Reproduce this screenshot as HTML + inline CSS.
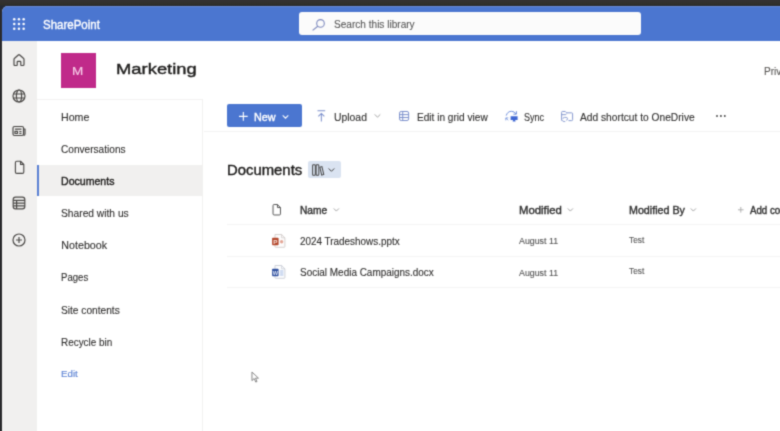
<!DOCTYPE html>
<html><head><meta charset="utf-8">
<style>
html,body{margin:0;padding:0;}
body{width:780px;height:431px;overflow:hidden;background:#2a2a2d;position:relative;font-family:"Liberation Sans",sans-serif;}
#root{position:absolute;left:0;top:0;width:780px;height:431px;background:#2a2a2d;filter:url(#bl);overflow:hidden;}
#win{position:absolute;left:2px;top:6px;width:778px;height:425px;background:#fff;border-top-left-radius:6px;overflow:hidden;}
#c{position:absolute;left:-2px;top:-6px;width:780px;height:431px;}
.t{position:absolute;white-space:nowrap;line-height:1;transform-origin:0 50%;}
.b{position:absolute;}
svg{position:absolute;overflow:visible;}
.hl{position:absolute;left:227px;width:553px;height:1px;background:#f4f4f4;}
</style></head><body>
<svg width="0" height="0" style="position:absolute"><filter id="bl" x="0" y="0" width="100%" height="100%" color-interpolation-filters="sRGB"><feConvolveMatrix order="3" kernelMatrix="1 4 1 4 16 4 1 4 1" divisor="36" edgeMode="duplicate" preserveAlpha="true"/></filter></svg>
<div id="root">
<div style="position:absolute;left:0;top:0;width:780px;height:8px;background:linear-gradient(#343133 0,#302f2a 55%,#232836 85%);"></div>
<div id="win"><div id="c">
 <div class="b" style="left:0;top:6px;width:780px;height:34.5px;background:#4b76d0;box-shadow:inset 0 1px 0 #6888d6;"></div>
 <!-- waffle -->
 <svg style="left:13.2px;top:17.6px" width="11.9" height="11.9" viewBox="0 0 11.9 11.9" fill="#fff"><circle cx="1.25" cy="1.25" r="1.25"/><circle cx="5.95" cy="1.25" r="1.25"/><circle cx="10.65" cy="1.25" r="1.25"/><circle cx="1.25" cy="5.95" r="1.25"/><circle cx="5.95" cy="5.95" r="1.25"/><circle cx="10.65" cy="5.95" r="1.25"/><circle cx="1.25" cy="10.65" r="1.25"/><circle cx="5.95" cy="10.65" r="1.25"/><circle cx="10.65" cy="10.65" r="1.25"/></svg>
 <!-- search -->
 <div class="b" style="left:299px;top:12.3px;width:342px;height:23px;background:#fbfbfb;border-radius:3px;"></div>
 <svg style="left:312px;top:19px" width="13" height="12" viewBox="0 0 13 12" fill="none" stroke="#7d89be" stroke-width="1.1"><circle cx="8.5" cy="4.4" r="3.8"/><path d="M5.8 7.2 L0.6 11.4"/></svg>

 <div class="b" style="left:2px;top:40.5px;width:35px;height:391px;background:#f1f0ef;"></div>
 <!-- rail icons -->
 <svg style="left:12px;top:53px" width="14" height="14" viewBox="0 0 14 14" fill="none" stroke="#4a4846" stroke-width="1.2" stroke-linejoin="round"><path d="M2 6.6 Q2 5.8 2.6 5.3 L6.3 2 Q7 1.4 7.7 2 L11.4 5.3 Q12 5.8 12 6.6 V11.5 Q12 12.5 11 12.5 H9.3 Q8.8 12.5 8.8 12 V9 Q8.8 8.3 8.1 8.3 H5.9 Q5.2 8.3 5.2 9 V12 Q5.2 12.5 4.7 12.5 H3 Q2 12.5 2 11.5 Z"/></svg>
 <svg style="left:12px;top:89px" width="14" height="14" viewBox="0 0 14 14" fill="none" stroke="#4a4846" stroke-width="1.2"><circle cx="7" cy="7" r="6"/><ellipse cx="7" cy="7" rx="2.6" ry="6"/><path d="M1.5 5 H12.5 M1.5 9 H12.5"/></svg>
 <svg style="left:12px;top:125px" width="14" height="12" viewBox="0 0 14 12" fill="none" stroke="#4a4846" stroke-width="1.2" stroke-linejoin="round"><rect x="1" y="1.5" width="10.5" height="9" rx="1.5"/><path d="M11.5 4 H13 V9 Q13 10.5 11.5 10.5"/><path d="M3 4.2 H9.5"/><rect x="3" y="6.3" width="2.5" height="2.2"/><path d="M7.3 6.5 H9.5 M7.3 8.3 H9.5"/></svg>
 <svg style="left:13.6px;top:159.6px" width="11.2" height="14.6" viewBox="0 0 12 15" fill="none" stroke="#4a4846" stroke-width="1.2" stroke-linejoin="round"><path d="M1.5 2.5 Q1.5 1 3 1 H7 L10.5 4.5 V12.5 Q10.5 14 9 14 H3 Q1.5 14 1.5 12.5 Z"/><path d="M7 1 V4.5 H10.5"/></svg>
 <svg style="left:12px;top:196px" width="14" height="14" viewBox="0 0 14 14" fill="none" stroke="#4a4846" stroke-width="1.2"><rect x="1.2" y="1.2" width="11.6" height="11.6" rx="2.4"/><path d="M1.2 4.3 H12.8 M1.2 7.1 H12.8 M1.2 9.9 H12.8 M4.6 4.3 V12.8"/></svg>
 <svg style="left:12px;top:233px" width="14" height="14" viewBox="0 0 14 14" fill="none" stroke="#4a4846" stroke-width="1.2"><circle cx="7" cy="7" r="6"/><path d="M7 4 V10 M4 7 H10"/></svg>

 <!-- site header -->
 <div class="b" style="left:61px;top:53.2px;width:34.5px;height:34.8px;background:#c02a8a;"></div>

 <!-- nav -->
 <div class="b" style="left:37px;top:99px;width:166px;height:332px;background:#fff;border-right:1px solid #f2f1f0;border-top:1px solid #f3f2f1;box-sizing:border-box;"></div>
 <div class="b" style="left:37px;top:165px;width:165.5px;height:31.3px;background:#f1f0ef;border-left:2px solid #5a80d3;box-sizing:border-box;"></div>

 <!-- toolbar -->
 <div class="b" style="left:204px;width:576px;top:130.5px;height:1px;background:#f3f3f3;"></div>
 <div class="b" style="left:226.5px;top:104.2px;width:75px;height:23.1px;background:#4b76d0;border-radius:2px;"></div>
 <svg style="left:239px;top:111.7px" width="8.7" height="8.7" viewBox="0 0 10 10" stroke="#fff" stroke-width="1.3" fill="none"><path d="M5 0 V10 M0 5 H10"/></svg>
 <svg style="left:282.3px;top:114.6px" width="7" height="4" viewBox="0 0 8 5" stroke="#fff" stroke-width="1.3" fill="none"><path d="M0.5 0.5 L4 4 L7.5 0.5"/></svg>

 <svg style="left:317.4px;top:109.8px" width="8.7" height="12" viewBox="0 0 10 14" stroke="#7c90cc" stroke-width="1.2" fill="none"><path d="M0.5 1 H9.5 M5 13.5 V4 M1.5 7.5 L5 4 L8.5 7.5"/></svg>
 <svg style="left:373.7px;top:114.4px" width="7" height="4" viewBox="0 0 8 5" stroke="#999" stroke-width="1.1" fill="none"><path d="M0.5 0.5 L4 4 L7.5 0.5"/></svg>

 <svg style="left:399.2px;top:111.3px" width="10.2" height="10" viewBox="0 0 11 11" stroke="#7c90cc" stroke-width="1.1" fill="none"><rect x="0.5" y="0.5" width="10" height="10" rx="1.8"/><path d="M0.5 4 H10.5 M0.5 7.2 H10.5 M4 0.5 V10.5"/></svg>

 <svg style="left:505px;top:109.6px" width="13" height="12" viewBox="0 0 13 12" fill="none" stroke="#6f8fdc" stroke-width="1"><path d="M1.2 5.6 Q2.6 1.3 6.4 1.3 Q9.4 1.3 10.9 3.9"/><path d="M11.4 1.2 V4.2 H8.4"/><path d="M0.8 10.4 V7.9 H3.3 M0.9 8 L3.2 10.3" stroke-width="0.8"/><path d="M5.6 6.2 H12.6 V10 H10.2 L10.6 11.6 H7.6 L8 10 H5.6 Z" fill="#3f67d3" stroke="none"/></svg>

 <svg style="left:561px;top:110.8px" width="12.2" height="11" viewBox="0 0 13 12" stroke="#7c90cc" stroke-width="1" fill="none"><path d="M0.5 10.5 V1.5 Q0.5 0.5 1.5 0.5 H4.5 L6 2 H11.5 Q12.5 2 12.5 3 V9.5 Q12.5 10.5 11.5 10.5 H8"/><path d="M0.5 4 H5 L6 2.8"/><path d="M2 8.5 Q2 7 3.5 7 H5.5 Q7 7 7 8.5 Q7 10 5.5 10 M4.5 11.5 H3 Q1.5 11.5 1.5 10" stroke-width="0.9"/></svg>
 <svg style="left:716.1px;top:115px" width="9.8" height="2" viewBox="0 0 9.8 2" fill="#444"><circle cx="1" cy="1" r="0.95"/><circle cx="4.9" cy="1" r="0.95"/><circle cx="8.8" cy="1" r="0.95"/></svg>

 <!-- heading -->
 <div class="b" style="left:307.7px;top:161px;width:33px;height:17px;background:#dae3f1;border-radius:2px;"></div>
 <svg style="left:312px;top:164px" width="12.4" height="12" viewBox="0 0 12 11" preserveAspectRatio="none" stroke="#444" stroke-width="0.95" fill="none"><rect x="0.6" y="0.6" width="2.6" height="9.8" rx="0.8"/><rect x="4" y="0.6" width="2.6" height="9.8" rx="0.8"/><path d="M7.6 3 L9.6 2.4 L11.4 9.6 L9.4 10.2 Z"/></svg>
 <svg style="left:328.3px;top:168.3px" width="6.9" height="3.8" viewBox="0 0 7 4" stroke="#444" stroke-width="1.05" fill="none"><path d="M0.5 0.5 L3.5 3.5 L6.5 0.5"/></svg>

 <!-- table header -->
 <svg style="left:271.7px;top:203.8px" width="9.5" height="11.5" viewBox="0 0 10 13" fill="none" stroke="#555" stroke-width="1.1" stroke-linejoin="round"><path d="M0.8 1.8 Q0.8 0.6 2 0.6 H5.8 L9.2 4 V11.2 Q9.2 12.4 8 12.4 H2 Q0.8 12.4 0.8 11.2 Z"/><path d="M5.8 0.6 V4 H9.2"/></svg>
 <svg style="left:333px;top:207.8px" width="6.7" height="3.5" viewBox="0 0 7 4" stroke="#999" stroke-width="1" fill="none"><path d="M0.5 0.5 L3.5 3.5 L6.5 0.5"/></svg>
 <svg style="left:566.7px;top:207.8px" width="6.7" height="3.5" viewBox="0 0 7 4" stroke="#999" stroke-width="1" fill="none"><path d="M0.5 0.5 L3.5 3.5 L6.5 0.5"/></svg>
 <svg style="left:690px;top:207.8px" width="6.7" height="3.5" viewBox="0 0 7 4" stroke="#999" stroke-width="1" fill="none"><path d="M0.5 0.5 L3.5 3.5 L6.5 0.5"/></svg>
 <svg style="left:737.9px;top:207.2px" width="5.6" height="5.6" viewBox="0 0 6 6" stroke="#aaa" stroke-width="1" fill="none"><path d="M3 0 V6 M0 3 H6"/></svg>

 <div class="hl" style="top:224px;"></div>
 <div class="hl" style="top:256px;"></div>
 <div class="hl" style="top:287px;"></div>

 <!-- row icons -->
 <svg style="left:271.5px;top:233.6px" width="13.4" height="13.8" viewBox="0 0 13.4 13.8"><path d="M3 0.5 H9.6 L12.9 3.8 V12.6 Q12.9 13.3 12.2 13.3 H3.7 Q3 13.3 3 12.6 Z" fill="#fdfcfc" stroke="#cdc6c4" stroke-width="0.8"/><path d="M9.6 0.5 V3.8 H12.9" fill="none" stroke="#cdc6c4" stroke-width="0.7"/><circle cx="9.6" cy="7.8" r="1.7" fill="#e3a595"/><rect x="0.1" y="3.8" width="6.5" height="7.5" rx="0.8" fill="#b4482c"/><text x="3.4" y="9.9" font-size="6.2" font-weight="bold" fill="#f6e3dc" text-anchor="middle" font-family="Liberation Sans">P</text></svg>
 <svg style="left:271.5px;top:264.8px" width="13.4" height="13.8" viewBox="0 0 13.4 13.8"><path d="M3 0.5 H9.6 L12.9 3.8 V12.6 Q12.9 13.3 12.2 13.3 H3.7 Q3 13.3 3 12.6 Z" fill="#fcfdfe" stroke="#c4c8d2" stroke-width="0.8"/><path d="M9.6 0.5 V3.8 H12.9" fill="none" stroke="#c4c8d2" stroke-width="0.7"/><path d="M8 6 H11.4 M8 8 H11.4 M8 10 H11.4" stroke="#9db3e3" stroke-width="0.9"/><rect x="0.1" y="3.8" width="6.5" height="7.5" rx="0.8" fill="#31519f"/><text x="3.4" y="9.7" font-size="5.6" font-weight="bold" fill="#dfe6f5" text-anchor="middle" font-family="Liberation Sans">W</text></svg>

 <!-- cursor -->
 <svg style="left:251.4px;top:370.6px" width="8.6" height="12.6" viewBox="0 0 9 13" fill="#fff" stroke="#777" stroke-width="0.9" stroke-linejoin="round"><path d="M1 1 V10 L3.3 7.8 L5 11.5 L6.3 10.9 L4.7 7.4 H7.8 Z"/></svg>
<span class="t" style="left:43.19px;top:18.92px;font-size:12.35px;color:#fff;-webkit-text-stroke:0.38px #fff;transform:scaleX(0.9311);">SharePoint</span>
<span class="t" style="left:333.74px;top:19.96px;font-size:10.01px;color:#5a5a5a;-webkit-text-stroke:0.12px #5a5a5a;transform:scaleX(1.0076);">Search this library</span>
<span class="t" style="left:72.47px;top:66.37px;font-size:11.25px;color:#f6cfe9;-webkit-text-stroke:0.12px #f6cfe9;transform:scaleX(1.2000);">M</span>
<span class="t" style="left:116.02px;top:60.93px;font-size:15.23px;color:#1e1d1c;-webkit-text-stroke:0.38px #1e1d1c;transform:scaleX(1.2091);">Marketing</span>
<span class="t" style="left:764.38px;top:67.39px;font-size:10.43px;color:#5c5a58;-webkit-text-stroke:0.12px #5c5a58;transform:scaleX(0.9700);">Private</span>
<span class="t" style="left:61.35px;top:111.85px;font-size:10.70px;color:#323130;-webkit-text-stroke:0.12px #323130;transform:scaleX(0.9963);">Home</span>
<span class="t" style="left:61.41px;top:143.85px;font-size:10.70px;color:#323130;-webkit-text-stroke:0.12px #323130;transform:scaleX(0.9448);">Conversations</span>
<span class="t" style="left:61.36px;top:176.18px;font-size:10.70px;color:#1e1d1c;-webkit-text-stroke:0.38px #1e1d1c;transform:scaleX(0.9887);">Documents</span>
<span class="t" style="left:61.39px;top:207.95px;font-size:10.70px;color:#323130;-webkit-text-stroke:0.12px #323130;transform:scaleX(0.9580);">Shared with us</span>
<span class="t" style="left:61.35px;top:240.05px;font-size:10.70px;color:#323130;-webkit-text-stroke:0.12px #323130;transform:scaleX(1.0000);">Notebook</span>
<span class="t" style="left:61.45px;top:271.75px;font-size:10.70px;color:#323130;-webkit-text-stroke:0.12px #323130;transform:scaleX(0.8966);">Pages</span>
<span class="t" style="left:61.40px;top:304.65px;font-size:10.70px;color:#323130;-webkit-text-stroke:0.12px #323130;transform:scaleX(0.9508);">Site contents</span>
<span class="t" style="left:61.42px;top:336.65px;font-size:10.70px;color:#323130;-webkit-text-stroke:0.12px #323130;transform:scaleX(0.9278);">Recycle bin</span>
<span class="t" style="left:61.36px;top:368.83px;font-size:9.88px;color:#5a80d3;-webkit-text-stroke:0.12px #5a80d3;transform:scaleX(0.9875);">Edit</span>
<span class="t" style="left:254.33px;top:111.74px;font-size:10.56px;color:#fff;-webkit-text-stroke:0.38px #fff;transform:scaleX(1.0200);">New</span>
<span class="t" style="left:333.73px;top:112.92px;font-size:10.15px;color:#323130;-webkit-text-stroke:0.12px #323130;transform:scaleX(1.0258);">Upload</span>
<span class="t" style="left:416.55px;top:112.92px;font-size:10.15px;color:#323130;-webkit-text-stroke:0.12px #323130;transform:scaleX(0.9972);">Edit in grid view</span>
<span class="t" style="left:523.97px;top:112.92px;font-size:10.15px;color:#323130;-webkit-text-stroke:0.12px #323130;transform:scaleX(0.8955);">Sync</span>
<span class="t" style="left:579.75px;top:112.92px;font-size:10.15px;color:#323130;-webkit-text-stroke:0.12px #323130;transform:scaleX(1.0088);">Add shortcut to OneDrive</span>
<span class="t" style="left:227.31px;top:164.09px;font-size:13.85px;color:#1e1d1c;-webkit-text-stroke:0.38px #1e1d1c;transform:scaleX(1.0739);">Documents</span>
<span class="t" style="left:300.14px;top:205.96px;font-size:10.01px;color:#333;-webkit-text-stroke:0.38px #333;transform:scaleX(1.0192);">Name</span>
<span class="t" style="left:518.92px;top:205.96px;font-size:10.01px;color:#333;-webkit-text-stroke:0.38px #333;transform:scaleX(1.1324);">Modified</span>
<span class="t" style="left:628.73px;top:205.96px;font-size:10.01px;color:#333;-webkit-text-stroke:0.38px #333;transform:scaleX(1.0692);">Modified By</span>
<span class="t" style="left:750.14px;top:205.96px;font-size:10.01px;color:#333;-webkit-text-stroke:0.38px #333;transform:scaleX(0.9700);">Add column</span>
<span class="t" style="left:300.16px;top:236.56px;font-size:10.01px;color:#323130;-webkit-text-stroke:0.12px #323130;transform:scaleX(0.9900);">2024 Tradeshows.pptx</span>
<span class="t" style="left:300.15px;top:267.86px;font-size:10.01px;color:#323130;-webkit-text-stroke:0.12px #323130;transform:scaleX(0.9940);">Social Media Campaigns.docx</span>
<span class="t" style="left:518.95px;top:237.39px;font-size:8.92px;color:#555;-webkit-text-stroke:0.12px #555;transform:scaleX(0.9897);">August 11</span>
<span class="t" style="left:518.95px;top:269.19px;font-size:8.92px;color:#555;-webkit-text-stroke:0.12px #555;transform:scaleX(0.9897);">August 11</span>
<span class="t" style="left:628.57px;top:235.72px;font-size:8.64px;color:#555;-webkit-text-stroke:0.12px #555;transform:scaleX(0.9600);">Test</span>
<span class="t" style="left:628.57px;top:267.02px;font-size:8.64px;color:#555;-webkit-text-stroke:0.12px #555;transform:scaleX(0.9600);">Test</span>
</div></div>
</div>
</body></html>
